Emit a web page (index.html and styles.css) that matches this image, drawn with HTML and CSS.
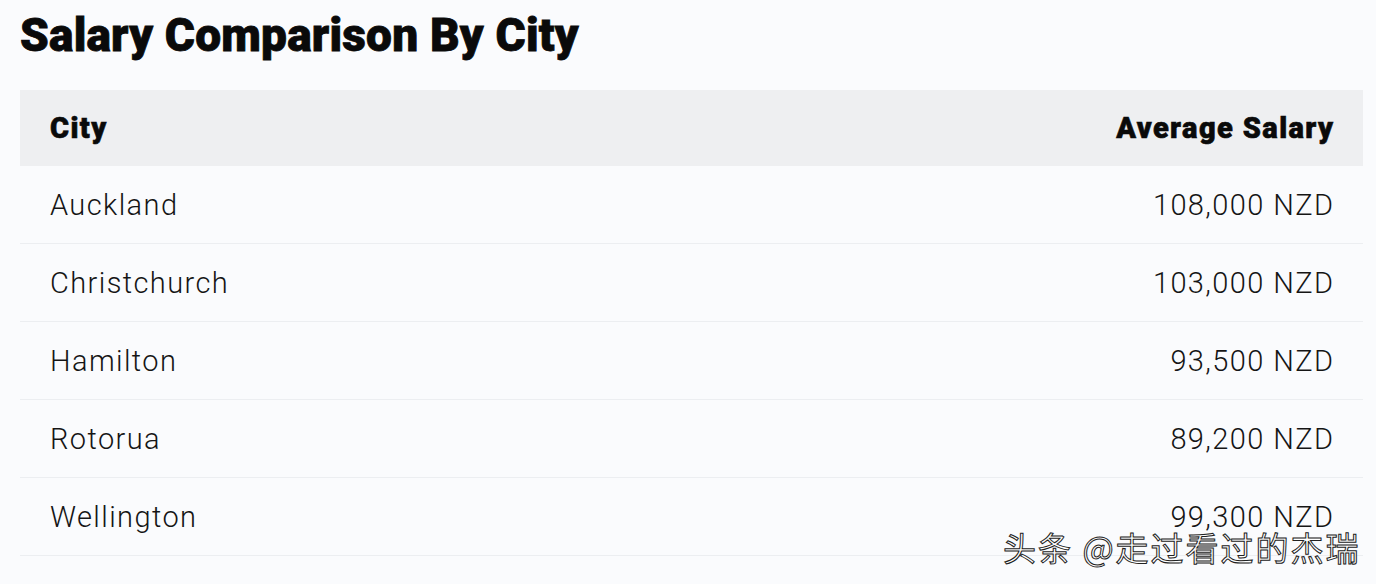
FILE: index.html
```html
<!DOCTYPE html>
<html lang="en">
<head>
<meta charset="utf-8">
<link rel="stylesheet" href="styles.css">
</head>
<body>
<main class="page">
  <h1 class="title">Salary Comparison By City</h1>
  <table class="salary-table">
    <thead>
      <tr><th class="col-city">City</th><th class="col-salary">Average Salary</th></tr>
    </thead>
    <tbody>
      <tr><td>Auckland</td><td class="num">108,000 NZD</td></tr>
      <tr><td>Christchurch</td><td class="num">103,000 NZD</td></tr>
      <tr><td>Hamilton</td><td class="num">93,500 NZD</td></tr>
      <tr><td>Rotorua</td><td class="num">89,200 NZD</td></tr>
      <tr><td>Wellington</td><td class="num">99,300 NZD</td></tr>
    </tbody>
  </table>
  <div class="watermark">头条 @走过看过的杰瑞</div>
</main>
</body>
</html>
```
FILE: styles.css
```css
html, body {
  margin: 0;
  padding: 0;
  background: #fafbfd;
}
body {
  width: 1376px;
  height: 584px;
  overflow: hidden;
  font-family: Roboto, "Liberation Sans", sans-serif;
  color: #111;
}
.page {
  position: relative;
  padding: 8px 13px 0 20px;
  height: 100%;
  box-sizing: border-box;
}
.title {
  margin: 0;
  font-size: 46px;
  font-weight: 900;
  line-height: 54px;
  letter-spacing: 0.2px;
  color: #0a0a0a;
  -webkit-text-stroke: 0.8px #0a0a0a;
}
.salary-table {
  margin-top: 28px;
  width: 1343px;
  border-collapse: collapse;
}
.salary-table th {
  background: #eeeff1;
  height: 76px;
  font-size: 29px;
  font-weight: 900;
  letter-spacing: 1.4px;
  text-align: left;
  padding: 0 28.6px 0 30px;
  color: #0a0a0a;
  -webkit-text-stroke: 0.6px #0a0a0a;
}
.salary-table th.col-salary { text-align: right; }
.salary-table td {
  height: 77px;
  padding: 0 28.6px 0 30px;
  font-size: 29px;
  font-weight: 300;
  letter-spacing: 1.4px;
  color: #151515;
  border-bottom: 1px solid #eceef1;
}
.salary-table td.num { text-align: right; }
.watermark {
  position: absolute;
  left: 1003px;
  top: 523px;
  font-family: "Noto Sans CJK SC", sans-serif;
  font-size: 33px;
  color: #fff;
  letter-spacing: 2px;
  -webkit-text-stroke: 1px #222;
}
```
